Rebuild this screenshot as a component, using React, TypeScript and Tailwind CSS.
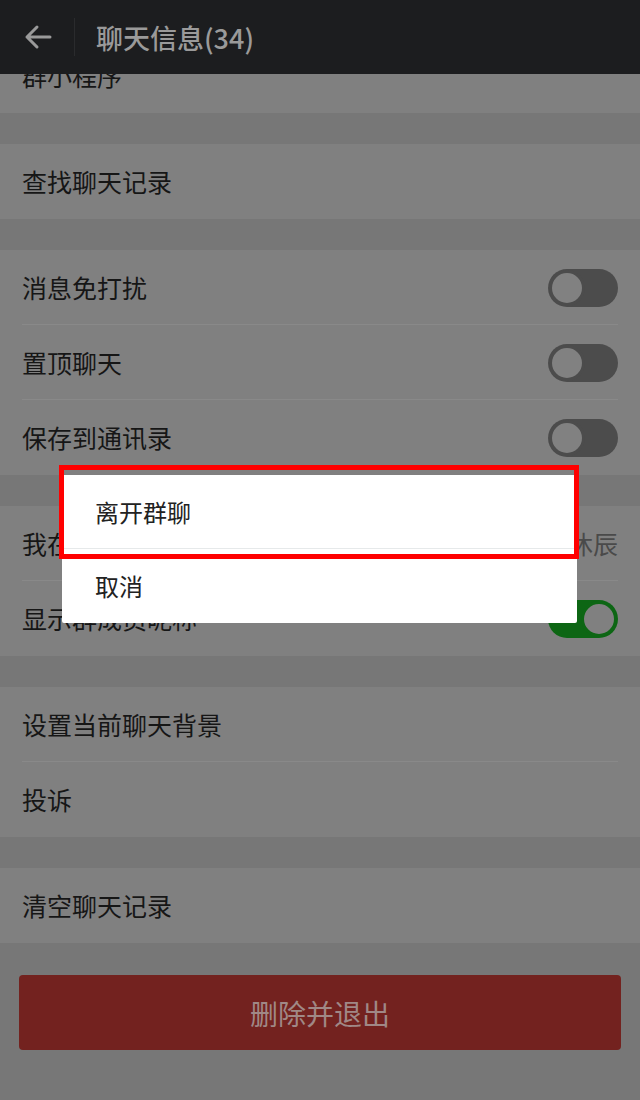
import type { FC } from "react";

const font = { fontFamily: '"Noto Sans CJK SC", "Noto Sans", Roboto, sans-serif' };

const Toggle: FC<{ on?: boolean }> = ({ on }) =>
  on ? (
    <div className="w-[70px] h-[38px] rounded-full bg-[#0d6614] flex items-center justify-end">
      <div className="w-[36px] h-[36px] rounded-full bg-[#808080] border-[3px] border-[#0d6614] mr-[1px]" />
    </div>
  ) : (
    <div className="w-[70px] h-[38px] rounded-full bg-[#4c4c4c] flex items-center justify-start">
      <div className="w-[36px] h-[36px] rounded-full bg-[#818181] border-[3px] border-[#4c4c4c] ml-[1px]" />
    </div>
  );

const Row: FC<{ label: string; right?: React.ReactNode; divider?: boolean }> = ({
  label,
  right,
  divider,
}) => (
  <div className="relative h-[75px] flex items-center justify-between pl-[22px] pr-[22px]">
    <span className="text-[25px] text-[#161616]">{label}</span>
    {right}
    {divider && <div className="absolute left-[22px] right-[22px] bottom-0 h-px bg-[#898989]" />}
  </div>
);

const Gap: FC = () => <div className="h-[31px] bg-[#777777]" />;

const App: FC = () => {
  return (
    <div className="relative w-[640px] h-[1100px] overflow-hidden bg-[#777777]" style={font}>
      {/* Header */}
      <header className="h-[74px] bg-[#1c1d1f] flex items-center">
        <div className="w-[74px] h-full flex items-center justify-center">
          <svg width="28" height="26" viewBox="0 0 28 26" fill="none" className="ml-[2px]">
            <path d="M26 13H3M13 3L3 13l10 10" stroke="#9a9a9a" strokeWidth="3" strokeLinecap="round" strokeLinejoin="round" />
          </svg>
        </div>
        <div className="w-px h-[38px] bg-[#2a2b2d]" />
        <h1 className="ml-[21px] text-[27px] font-medium text-[#9a9a9a] leading-none">聊天信息(34)</h1>
      </header>

      {/* Scrolled list */}
      <div className="h-[39px] overflow-hidden bg-[#808080]">
        <div className="mt-[-36px] h-[75px] flex items-center pl-[22px]">
          <span className="text-[25px] text-[#161616]">群小程序</span>
        </div>
      </div>
      <Gap />
      <div className="bg-[#808080]">
        <Row label="查找聊天记录" />
      </div>
      <Gap />
      <div className="bg-[#808080]">
        <Row label="消息免打扰" right={<Toggle />} divider />
        <Row label="置顶聊天" right={<Toggle />} divider />
        <Row label="保存到通讯录" right={<Toggle />} />
      </div>
      <Gap />
      <div className="bg-[#808080]">
        <Row
          label="我在本群的昵称"
          right={<span className="text-[25px] text-[#4a4a4a]">叶沐辰</span>}
          divider
        />
        <Row label="显示群成员昵称" right={<Toggle on />} />
      </div>
      <Gap />
      <div className="bg-[#808080]">
        <Row label="设置当前聊天背景" divider />
        <Row label="投诉" />
      </div>
      <Gap />
      <div className="bg-[#808080]">
        <Row label="清空聊天记录" />
      </div>

      <div className="px-[19px] pt-[32px]">
        <button className="w-full h-[75px] rounded-[4px] bg-[#73221f] text-[28px] text-[#a08886]">
          删除并退出
        </button>
      </div>

      {/* Dialog */}
      <div className="absolute left-[62px] top-[475px] w-[515px] bg-white rounded-[2px]">
        <div className="h-[74px] flex items-center pl-[33px] border-b border-[#e6e9ea]">
          <span className="text-[24px] text-[#222]">离开群聊</span>
        </div>
        <div className="h-[74px] flex items-center pl-[33px]">
          <span className="text-[24px] text-[#222]">取消</span>
        </div>
      </div>
      {/* Highlight */}
      <div className="absolute left-[59px] top-[465px] w-[520px] h-[94px] border-[5px] border-[#ff0000]" />
    </div>
  );
};

export default App;
